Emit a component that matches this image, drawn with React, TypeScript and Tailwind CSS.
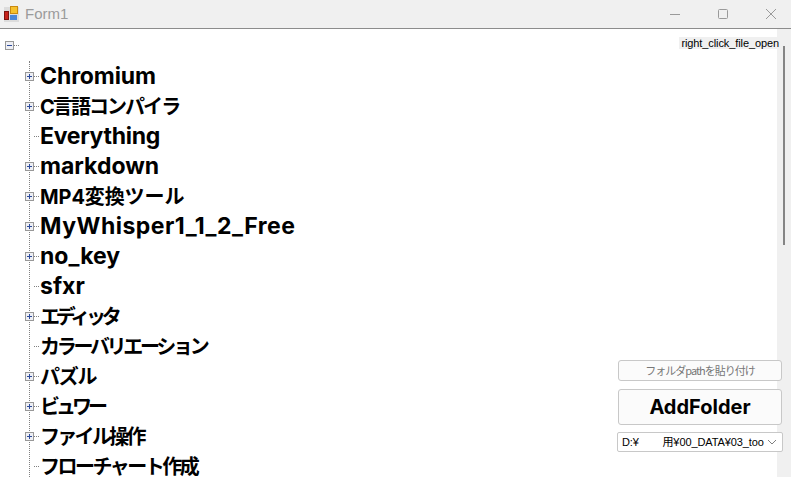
const items = [
  { name: "Chromium", more: true, cls: "text-[23px] tracking-[-0.1px]" },
  { name: "C言語コンパイラ", more: true, cls: "pt-[2px] text-[20px] tracking-[-1.95px]" },
  { name: "Everything", more: false, cls: "text-[23px] tracking-[-0.3px]" },
  { name: "markdown", more: true, cls: "text-[23px]" },
  { name: "MP4変換ツール", more: true, cls: "pt-[2px] text-[20px] tracking-[-0.1px]" },
  { name: "MyWhisper1_1_2_Free", more: true, cls: "text-[23px] tracking-[0.5px]" },
  { name: "no_key", more: true, cls: "text-[23px]" },
  { name: "sfxr", more: false, cls: "text-[23px]" },
  { name: "エディッタ", more: true, cls: "pt-[2px] text-[20px] tracking-[-4.2px]" },
  { name: "カラーバリエーション", more: false, cls: "pt-[2px] text-[20px] tracking-[-3.3px]" },
  { name: "パズル", more: true, cls: "pt-[2px] text-[20px] tracking-[-1.3px]" },
  { name: "ビュワー", more: true, cls: "pt-[2px] text-[20px] tracking-[-4px]" },
  { name: "ファイル操作", more: true, cls: "pt-[2px] text-[20px] tracking-[-2.7px]" },
  { name: "フローチャート作成", more: false, cls: "pt-[2px] text-[20px] tracking-[-2.5px]" },
];

function ExpandBox({ open }: { open?: boolean }) {
  return (
    <svg width="9" height="9" viewBox="0 0 9 9" className="block shrink-0 bg-white">
      <rect x="0.5" y="0.5" width="8" height="8" fill="#eeeff4" stroke="#989898" />
      <path d="M2 4.5H7" stroke="#2d4a9a" />
      {!open && <path d="M4.5 2V7" stroke="#2d4a9a" />}
    </svg>
  );
}

function AppIcon() {
  return (
    <svg width="16" height="16" viewBox="0 0 16 16" className="block">
      <rect x="0" y="1" width="15" height="15" fill="#dcdcdc" />
      <rect x="6.5" y="0.5" width="7" height="7" fill="#f6c12c" stroke="#c98a10" />
      <rect x="0.5" y="5.5" width="4" height="8" fill="#c6231c" stroke="#7d1410" />
      <rect x="6" y="9" width="7" height="5" fill="#4a86d8" />
    </svg>
  );
}

function TreeRow({ name, more, cls }: { name: string; more: boolean; cls: string }) {
  return (
    <div className="flex h-[30px] items-center">
      <div className="flex w-[40px] items-center pl-[25px]">
        {more ? <ExpandBox /> : <div className="ml-[4px] w-[5px]" />}
        <div className="w-[5px] border-t border-dotted border-[#808080]" />
      </div>
      <span className={"whitespace-nowrap leading-[20px] font-bold text-black " + cls}>{name}</span>
    </div>
  );
}

export default function App() {
  return (
    <div className="flex h-[477px] w-[791px] flex-col overflow-hidden bg-white font-['Inter','Noto_Sans_CJK_JP',sans-serif]">
      <div className="flex h-[29px] shrink-0 items-center justify-between border-b border-[#8c8c8c] bg-[#f0f0f0]">
        <div className="flex items-center gap-[5px] pl-[4px]">
          <AppIcon />
          <span className="font-['Liberation_Sans',sans-serif] text-[15px] text-[#9b9b9b]">Form1</span>
        </div>
        <div className="flex items-center gap-[36px] pr-[14px]">
          <svg width="12" height="12" viewBox="0 0 12 12"><path d="M1 6.5H11" stroke="#9a9a9a" /></svg>
          <svg width="12" height="12" viewBox="0 0 12 12"><rect x="1.5" y="1.5" width="9" height="9" rx="1" fill="none" stroke="#9a9a9a" /></svg>
          <svg width="12" height="12" viewBox="0 0 12 12"><path d="M1 1L11 11M11 1L1 11" stroke="#9a9a9a" /></svg>
        </div>
      </div>

      <div className="relative flex min-h-0 flex-1">
        <div className="min-w-0 flex-1 overflow-hidden pt-[11px]">
          <div className="flex h-[11px] items-center pl-[5px]">
            <ExpandBox open />
            <div className="w-[5px] border-t border-dotted border-[#808080]" />
          </div>
          <div className="relative mt-[10px]">
            <div className="absolute top-0 bottom-0 left-[29px] border-l border-dotted border-[#808080]" />
            <div className="relative">
              {items.map((item) => (
                <TreeRow key={item.name} name={item.name} more={item.more} cls={item.cls} />
              ))}
            </div>
          </div>
        </div>

        <div className="w-[14px] shrink-0 bg-[#f0f0f0] pt-[17px] pl-[6px]">
          <div className="h-[199px] w-[2px] bg-[#858585]" />
        </div>

        <div className="absolute top-[8px] right-[11px] bg-[#f0f0f0] pr-[1px] pl-[2px] font-['Liberation_Sans',sans-serif] text-[11px] leading-[12px] tracking-[-0.1px] text-black">
          right_click_file_open
        </div>

        <div className="absolute right-[8px] bottom-[25px] flex w-[166px] flex-col items-center">
          <div className="flex h-[21px] w-[164px] items-center justify-center rounded-[3px] border border-[#c8c8c8] bg-[#fbfbfb] font-['Noto_Sans_CJK_JP',sans-serif] text-[11px] tracking-[-1px] text-[#777777]">
            フォルダpathを貼り付け
          </div>
          <div className="mt-[8px] flex h-[36px] w-[164px] items-center justify-center rounded-[3px] border border-[#c8c8c8] bg-[#fbfbfb] text-[20px] font-bold text-black">
            AddFolder
          </div>
          <div className="mt-[7px] flex h-[20px] w-[166px] items-center justify-between rounded-[2px] border border-[#c8c8c8] bg-white pr-[5px] pl-[4px] font-['Liberation_Sans','Noto_Sans_CJK_JP',sans-serif] text-[11px] text-black">
            <span className="whitespace-pre tracking-[-0.1px]">D:¥        用¥00_DATA¥03_too</span>
            <svg width="10" height="6" viewBox="0 0 10 6" className="shrink-0"><path d="M1 1L5 5L9 1" fill="none" stroke="#808080" /></svg>
          </div>
        </div>
      </div>
    </div>
  );
}
